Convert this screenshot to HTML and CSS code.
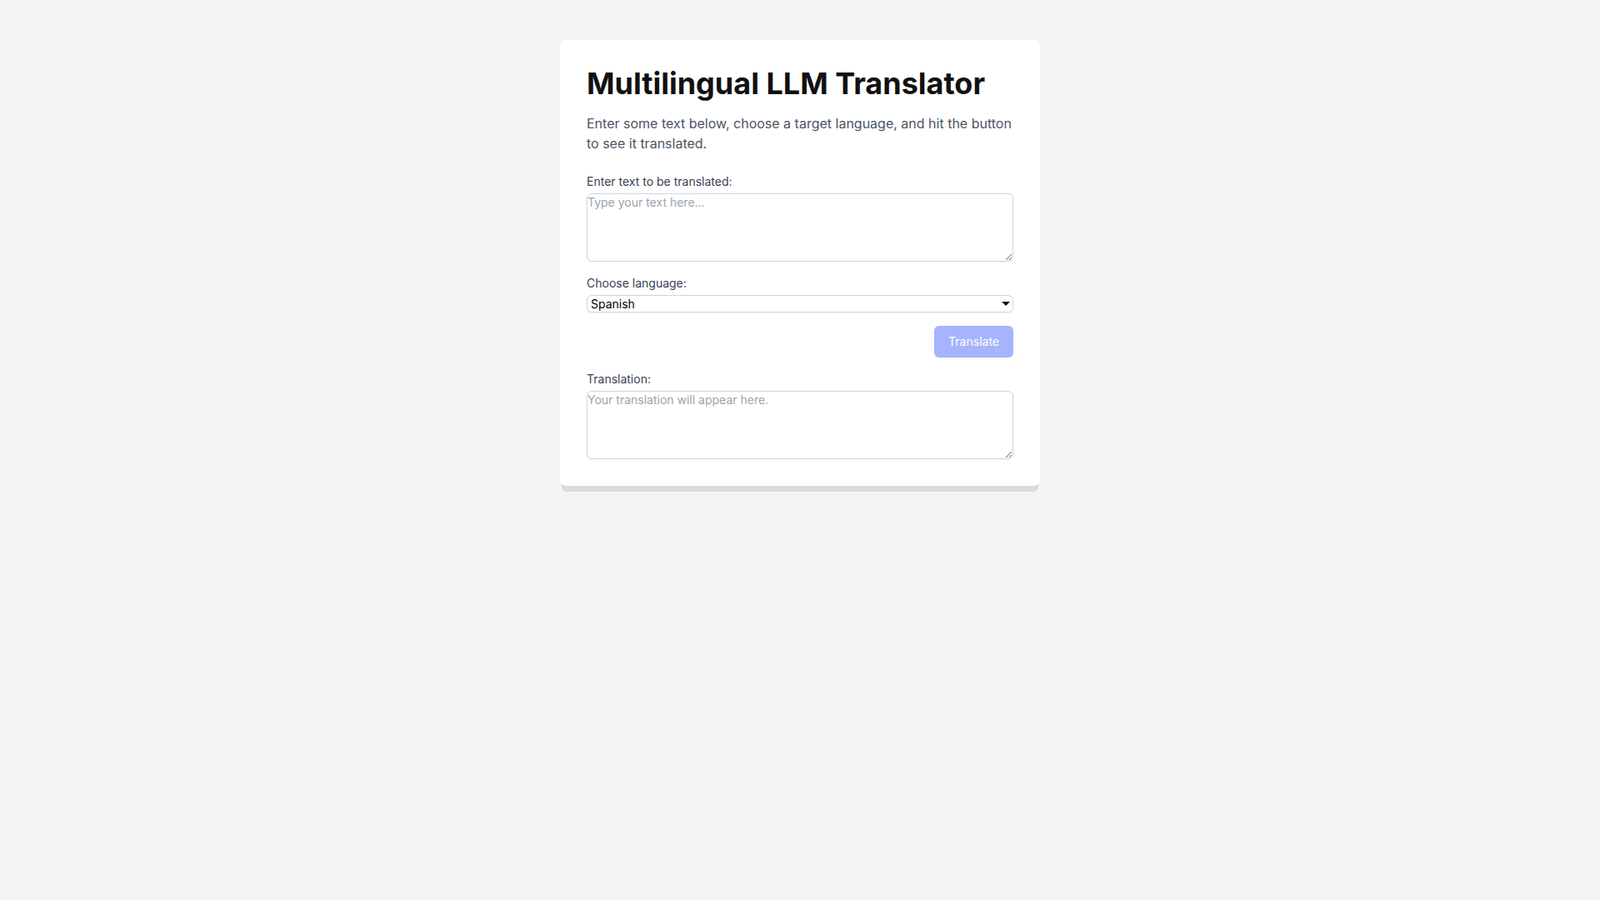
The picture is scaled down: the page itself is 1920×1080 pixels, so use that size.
FILE: index.html
```html
<!DOCTYPE html>
<html lang="en">
<head>
<meta charset="utf-8">
<title>Multilingual LLM Translator</title>
<link rel="stylesheet" href="styles.css">
</head>
<body>
<main class="page">
  <section class="card">
    <h1 class="title">Multilingual LLM Translator</h1>
    <p class="subtitle">Enter some text below, choose a target language, and hit the button to see it translated.</p>
    <div class="field">
      <label class="label" for="src">Enter text to be translated:</label>
      <textarea id="src" class="textarea" rows="4" placeholder="Type your text here..."></textarea>
    </div>
    <div class="field">
      <label class="label" for="lang">Choose language:</label>
      <div class="select-wrap">
        <select id="lang" class="select">
          <option>Spanish</option>
          <option>French</option>
          <option>German</option>
        </select>
      </div>
    </div>
    <div class="actions">
      <button class="button" type="button" disabled>Translate</button>
    </div>
    <div class="field last">
      <label class="label" for="out">Translation:</label>
      <textarea id="out" class="textarea" rows="4" placeholder="Your translation will appear here." readonly></textarea>
    </div>
  </section>
</main>
</body>
</html>
```
FILE: styles.css
```css
*, *::before, *::after { box-sizing: border-box; }
html, body { margin: 0; padding: 0; }
body {
  background: #f3f4f6;
  font-family: Inter, "Noto Sans", sans-serif;
  min-height: 100vh;
  line-height: 1.5;
}
.page {
  display: flex;
  justify-content: center;
  padding-top: 48px;
}
.card {
  width: 576px;
  background: #ffffff;
  border-radius: 8px;
  padding: 32px;
  box-shadow: 0 9px 0 -2px rgba(0, 0, 0, 0.1);
}
.title {
  margin: 0 0 16px 0;
  font-size: 36px;
  line-height: 40px;
  font-weight: 700;
  color: #111111;
}
.subtitle {
  margin: 0 0 24px 0;
  font-size: 16px;
  line-height: 24px;
  color: #4b5563;
}
.field { margin-bottom: 16px; }
.field.last { margin-bottom: 0; }
.label {
  display: block;
  font-size: 14px;
  line-height: 20px;
  font-weight: 400;
  color: #374151;
}
.textarea {
  display: block;
  width: 100%;
  margin: 4px 0 0 0;
  padding: 0;
  font-family: inherit;
  font-size: 14px;
  line-height: 20px;
  color: #111827;
  border: 1px solid #d1d5db;
  border-radius: 6px;
  box-shadow: 0 1px 2px 0 rgba(0, 0, 0, 0.05);
  background: #ffffff;
  outline: none;
}
.textarea::placeholder { color: #9ca3af; opacity: 1; }
.select-wrap {
  position: relative;
  margin-top: 4px;
}
.select-wrap::after {
  content: "";
  position: absolute;
  right: 4px;
  top: 8px;
  width: 0;
  height: 0;
  border-left: 5px solid transparent;
  border-right: 5px solid transparent;
  border-top: 5px solid #111111;
  pointer-events: none;
}
.select {
  display: block;
  width: 100%;
  margin: 0;
  padding: 0 20px 0 4px;
  -webkit-appearance: none;
  appearance: none;
  font-family: inherit;
  font-size: 14px;
  line-height: 19px;
  height: 21px;
  color: #000000;
  border: 1px solid #d1d5db;
  border-radius: 6px;
  box-shadow: 0 1px 2px 0 rgba(0, 0, 0, 0.05);
  background: #ffffff;
}
.actions {
  display: flex;
  justify-content: flex-end;
  margin-bottom: 16px;
}
.button {
  font-family: inherit;
  font-size: 14px;
  line-height: 20px;
  font-weight: 400;
  color: #ffffff;
  background: #a5b4fc;
  border: 1px solid transparent;
  border-radius: 6px;
  padding: 8px 16px;
  box-shadow: 0 1px 2px 0 rgba(0, 0, 0, 0.05);
  cursor: not-allowed;
}
```
